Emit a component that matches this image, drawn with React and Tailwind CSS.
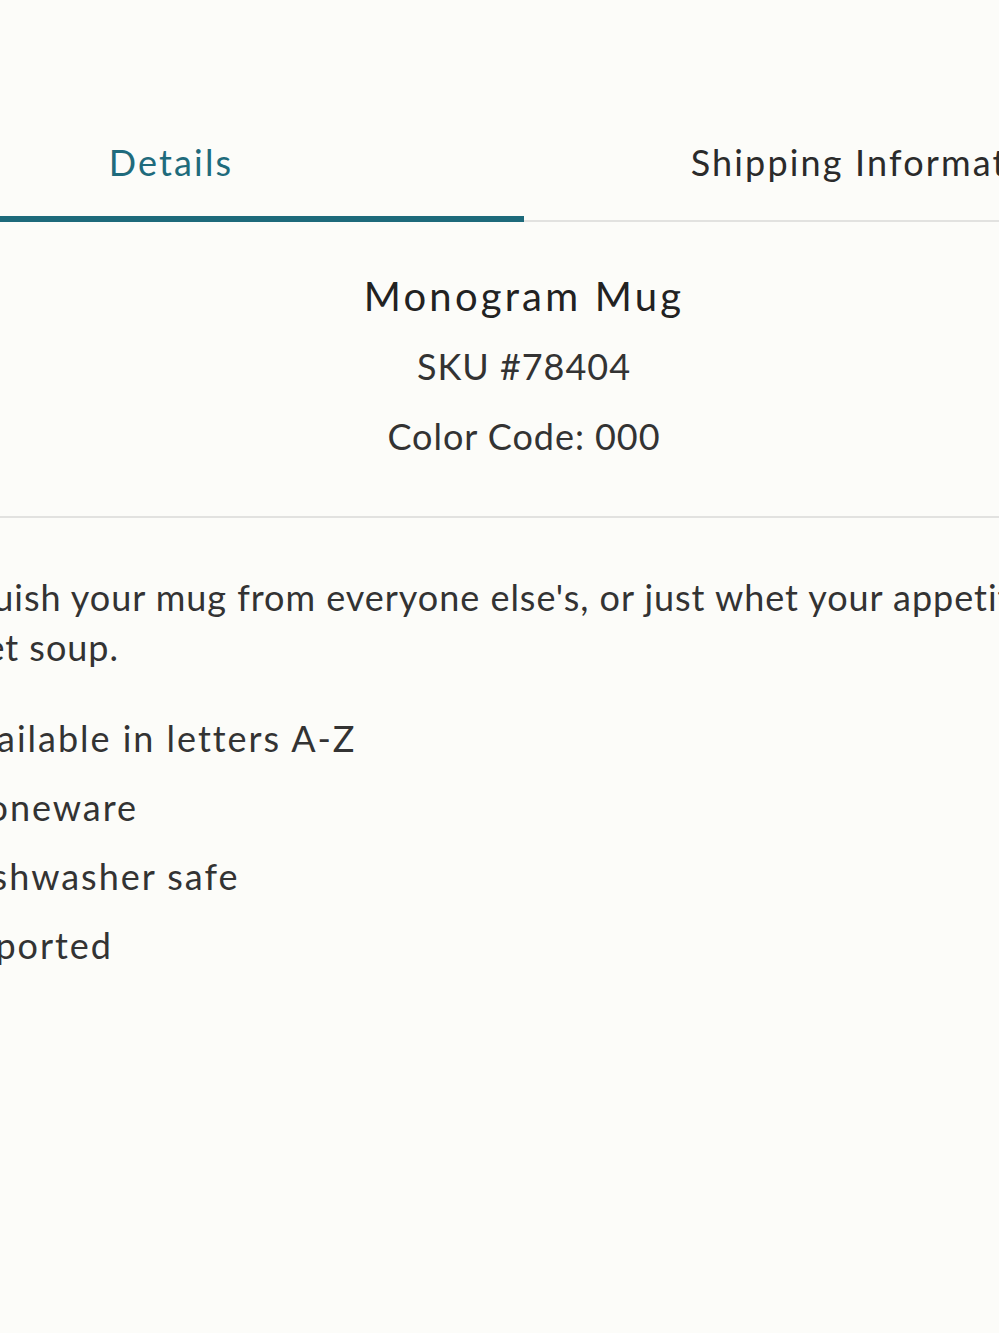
import React, { useState } from 'react';

const tabs = ['Details', 'Shipping Information'];

const features = ['Available in letters A-Z', 'Stoneware', 'Dishwasher safe', 'Imported'];

export default function App() {
  const [active, setActive] = useState('Details');

  return (
    <div className="min-h-screen overflow-hidden bg-[#fcfcf9] font-['Lato',sans-serif] tracking-[0.06em] text-[#333]">
      <div className="ml-[-182px] w-[1412px] pt-[140px]">
        {/* Tab bar */}
        <div className="flex border-b-2 border-[#e2e2e0]">
          {tabs.map((tab) => (
            <button
              key={tab}
              onClick={() => setActive(tab)}
              className={`relative w-1/2 pb-[36px] text-center text-[36px] leading-[44px] tracking-[0.06em] ${
                active === tab ? 'text-[#1f6b7c]' : 'text-[#2b2b2b]'
              }`}
            >
              {tab}
              {active === tab && (
                <span className="absolute -bottom-[2px] left-0 right-0 h-[6px] bg-[#1d6a7b]" />
              )}
            </button>
          ))}
        </div>

        {/* Product summary */}
        <div className="border-b-2 border-[#e2e2e0] pt-[39px] pb-[45px] text-center">
          <h2 className="text-[40px] leading-[70px] tracking-[0.08em] text-[#222]">Monogram Mug</h2>
          <p className="text-[36px] leading-[70px]">SKU #78404</p>
          <p className="text-[36px] leading-[70px]">Color Code: 000</p>
        </div>

        {/* Description */}
        <div className="pl-[57px] pt-[54px]">
          <p className="text-[36px] leading-[50px]">
            Distinguish your mug from everyone else's, or just whet your appetite for
            <br />
            alphabet soup.
          </p>
          <ul className="mt-[32px] pl-[77px]">
            {features.map((item) => (
              <li key={item} className="text-[36px] leading-[69px] tracking-[0.055em]">
                {item}
              </li>
            ))}
          </ul>
        </div>
      </div>
    </div>
  );
}
